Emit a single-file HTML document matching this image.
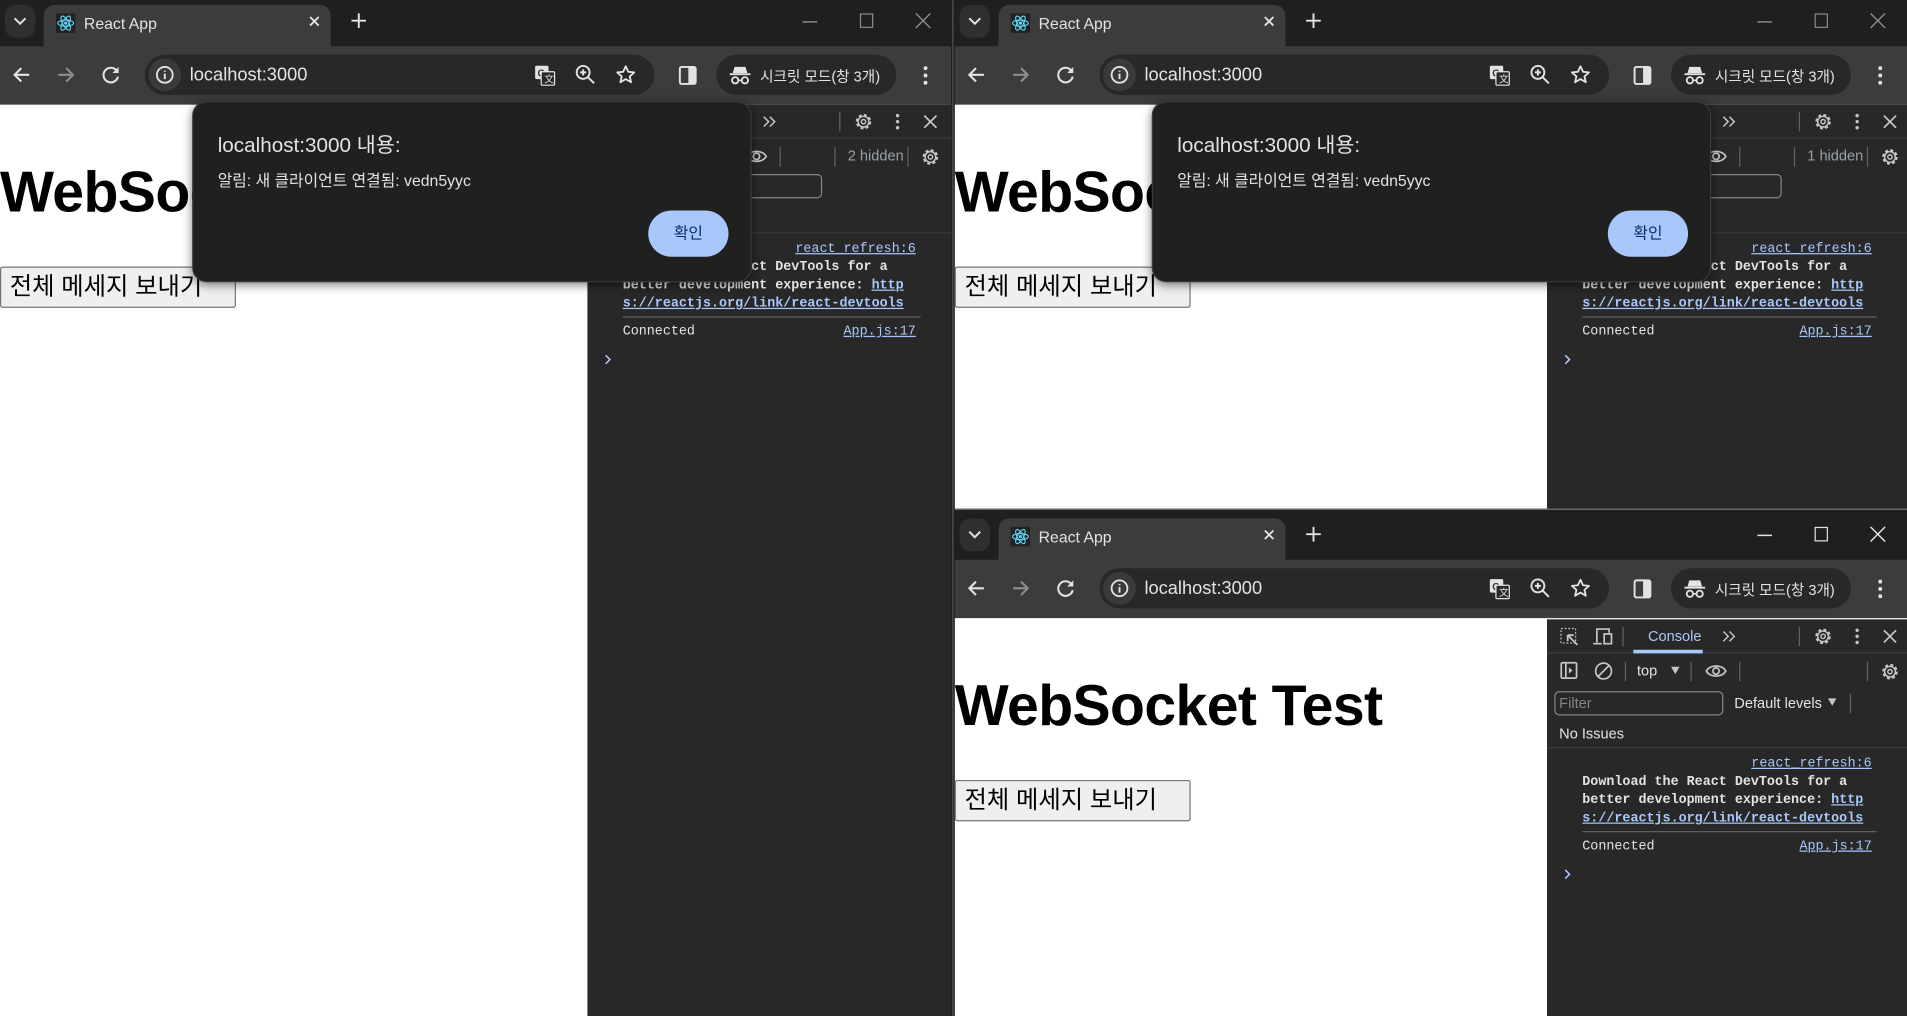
<!DOCTYPE html>
<html><head><meta charset="utf-8">
<style>
*{box-sizing:border-box;margin:0;padding:0}
html,body{width:1907px;height:1016px;overflow:hidden;background:#202020}
#stage{position:absolute;left:0;top:0;width:1568px;height:835px;transform:scale(1.21620,1.21677);transform-origin:0 0;font-family:"Liberation Sans","Noto Sans CJK KR",sans-serif}
.win{position:absolute;background:#1f1f1f;overflow:hidden}
.abs{position:absolute}
.tabbar{position:absolute;left:0;top:0;right:0;height:38px;background:#1f1f1f}
.dd{position:absolute;left:4px;top:4px;width:25px;height:27px;border-radius:9px;background:#2f2f2f}
.tab{position:absolute;left:36px;top:4px;width:236px;height:36px;background:#3c3c3c;border-radius:9px 9px 0 0}
.tabt{position:absolute;left:33px;top:8px;font-size:13px;color:#e3e3e3}
.toolbar{position:absolute;left:0;top:38px;right:0;height:48px;background:#3c3c3c}
.omni{position:absolute;left:119px;top:7px;width:419px;height:33px;border-radius:17px;background:#282828}
.url{position:absolute;left:37px;top:8px;font-size:15px;color:#e3e3e3}
.incog{position:absolute;left:589px;top:7px;width:148px;height:33px;border-radius:17px;background:#282828}
.incog span{position:absolute;left:36px;top:9px;font-size:12px;color:#e3e3e3;white-space:nowrap}
.content{position:absolute;left:0;top:86px;right:0;bottom:0;background:#fff}
h1{position:absolute;left:0;top:44px;font-size:47px;font-weight:bold;color:#000;white-space:nowrap;letter-spacing:-0.5px}
.btn{position:absolute;left:0;top:133px;width:194px;height:34px;background:#efefef;border:1px solid #767676;border-radius:2px;font-size:20px;color:#000;text-align:left;padding-left:7px;line-height:32px;white-space:nowrap;overflow:hidden}
.dt{position:absolute;top:0;bottom:0;background:#282828;color:#e3e3e3;font-size:12px}
.dt .row{position:absolute;left:0;right:0}
.sep{position:absolute;width:1px;height:16px;background:#5f6368}
.mono{font-family:"Liberation Mono",monospace;font-size:11px;font-weight:bold;color:#e3e3e3;white-space:nowrap}
.link{color:#a8c7fa;text-decoration:underline;font-weight:normal}
.dlg{position:absolute;width:460px;height:149px;background:#202020;border-radius:12px;border:1px solid #3a3a3a;box-shadow:0 2px 8px rgba(0,0,0,.5)}
.dlg .t{position:absolute;left:20px;top:21px;font-size:17px;color:#e3e3e3}
.dlg .m{position:absolute;left:20px;top:54px;font-size:13px;color:#e3e3e3}
.dlg .ok{position:absolute;left:374px;top:89px;width:66px;height:38px;border-radius:19px;background:#a8c7fa;color:#062e6f;font-size:13px;text-align:center;line-height:38px}
svg{position:absolute;overflow:visible}
</style></head><body><div id="stage">
<div class="win" style="left:0;top:0;width:782px;height:835px" id="w1"></div>
<div class="win" style="left:785px;top:0;width:783px;height:418px" id="w2"></div>
<div class="win" style="left:785px;top:422px;width:783px;height:413px" id="w3"></div>
<div class="abs" style="left:783px;top:0;width:1px;height:835px;background:#555"></div>
<div class="abs" style="left:785px;top:418px;width:783px;height:1px;background:#777"></div>
</div>
<script>
function chrome(active){
 var c=active?'#e3e3e3':'#8a8a8a';
 return `<div class="tabbar"><div class="dd"><svg style="left:7px;top:10px" width="11" height="7"><path d="M1 1l4.5 4.5L10 1" stroke="#e3e3e3" stroke-width="1.6" fill="none"/></svg></div>
 <div class="tab">
  <svg style="left:10px;top:7px" width="16" height="16" viewBox="-8 -8 16 16"><rect x="-8" y="-8" width="16" height="16" fill="#222"/><g stroke="#61dafb" stroke-width="0.9" fill="none"><ellipse rx="6.5" ry="2.5"/><ellipse rx="6.5" ry="2.5" transform="rotate(60)"/><ellipse rx="6.5" ry="2.5" transform="rotate(120)"/></g><circle r="1.3" fill="#61dafb"/></svg>
  <div class="tabt">React App</div>
  <svg style="left:218px;top:9px" width="9" height="9"><path d="M1 1l7 7M8 1l-7 7" stroke="#e3e3e3" stroke-width="1.5"/></svg>
 </div>
 <svg style="left:289px;top:11px" width="12" height="12"><path d="M6 0v12M0 6h12" stroke="#e3e3e3" stroke-width="1.6"/></svg>
 <svg style="left:660px;top:17px" width="12" height="2"><path d="M0 1h12" stroke="${c}" stroke-width="1.2"/></svg>
 <svg style="left:707px;top:11px" width="11" height="12"><rect x=".5" y=".5" width="10" height="11" stroke="${c}" fill="none"/></svg>
 <svg style="left:753px;top:11px" width="12" height="12"><path d="M0 0l12 12M12 0L0 12" stroke="${c}" stroke-width="1.2"/></svg>
 </div>
 <div class="toolbar">
 <svg style="left:10px;top:16px" width="15" height="15"><path d="M14 7.5H2M7.5 2L2 7.5 7.5 13" stroke="#e3e3e3" stroke-width="1.7" fill="none"/></svg>
 <svg style="left:47px;top:16px" width="15" height="15"><path d="M1 7.5h12M7.5 2L13 7.5 7.5 13" stroke="#8f8f8f" stroke-width="1.7" fill="none"/></svg>
 <svg style="left:84px;top:16px" width="15" height="15"><path d="M12.5 5A6 6 0 1 0 13 9" stroke="#e3e3e3" stroke-width="1.7" fill="none"/><path d="M13.5 1v5h-5z" fill="#e3e3e3"/></svg>
 <div class="omni">
  <div class="abs" style="left:3px;top:3px;width:27px;height:27px;border-radius:50%;background:#3a3a3a"></div>
  <svg style="left:9px;top:9px" width="15" height="15"><circle cx="7.5" cy="7.5" r="6.5" stroke="#e3e3e3" stroke-width="1.5" fill="none"/><path d="M7.5 6.5v4.5M7.5 4v1" stroke="#e3e3e3" stroke-width="1.6"/></svg>
  <div class="url">localhost:3000</div>
  <svg style="left:320px;top:8px" width="18" height="18"><rect x="1" y="1" width="11" height="11" fill="#e3e3e3" rx="1"/><text x="3" y="10" font-size="8" font-family="Liberation Sans" fill="#333" font-weight="bold">G</text><rect x="6" y="6" width="11" height="11" stroke="#e3e3e3" fill="#282828" rx="1"/><text x="8.5" y="15" font-size="8" fill="#e3e3e3">文</text></svg>
  <svg style="left:354px;top:8px" width="17" height="17"><circle cx="6.5" cy="6.5" r="5.3" stroke="#e3e3e3" stroke-width="1.6" fill="none"/><path d="M10.5 10.5l5 5M4 6.5h5M6.5 4v5" stroke="#e3e3e3" stroke-width="1.6"/></svg>
  <svg style="left:387px;top:8px" width="17" height="17"><path d="M8.5 1.5l2.1 4.5 4.9.5-3.7 3.3 1.1 4.8-4.4-2.6-4.4 2.6 1.1-4.8L1.5 6.5l4.9-.5z" stroke="#e3e3e3" stroke-width="1.5" fill="none" stroke-linejoin="round"/></svg>
 </div>
 <svg style="left:558px;top:16px" width="15" height="16"><rect x="1" y="1" width="13" height="14" rx="1.5" stroke="#e3e3e3" stroke-width="1.6" fill="none"/><rect x="8" y="1" width="6" height="14" fill="#e3e3e3"/></svg>
 <div class="incog"><svg style="left:11px;top:8px" width="17" height="17"><path d="M4 2h9l1.5 5h-12z" fill="#e3e3e3"/><path d="M0 8h17" stroke="#e3e3e3" stroke-width="1.5"/><circle cx="4.5" cy="13" r="2.6" stroke="#e3e3e3" stroke-width="1.5" fill="none"/><circle cx="12.5" cy="13" r="2.6" stroke="#e3e3e3" stroke-width="1.5" fill="none"/><path d="M7 13h3" stroke="#e3e3e3" stroke-width="1.3"/></svg><span>시크릿 모드(창 3개)</span></div>
 <svg style="left:759px;top:16px" width="4" height="16"><circle cx="2" cy="2" r="1.6" fill="#e3e3e3"/><circle cx="2" cy="8" r="1.6" fill="#e3e3e3"/><circle cx="2" cy="14" r="1.6" fill="#e3e3e3"/></svg>
 </div>`;
}
function gear(x,y){return `<svg style="left:${x}px;top:${y}px" width="16" height="16" viewBox="0 0 16 16"><circle cx="8" cy="8" r="5.2" stroke="#c4c7c5" stroke-width="2.4" stroke-dasharray="2.3 1.8" fill="none"/><circle cx="8" cy="8" r="4.4" stroke="#c4c7c5" stroke-width="1.2" fill="none"/><circle cx="8" cy="8" r="1.8" stroke="#c4c7c5" stroke-width="1.2" fill="none"/></svg>`}
function devtools(hidden){
 var filterRow = hidden
  ? `<div class="abs" style="left:6px;top:0px;width:187px;height:20px;border:1px solid #80868b;border-radius:4px"></div>`
  : `<div class="abs" style="left:6px;top:2px;width:139px;height:20px;border:1px solid #80868b;border-radius:4px;font-size:12px;color:#80868b;padding:2px 3px">Filter</div>
  <div class="abs" style="left:154px;top:5px;font-size:12px">Default levels</div>
  <svg style="left:231px;top:8px" width="7" height="6"><path d="M0 0h7L3.5 6z" fill="#c4c7c5"/></svg>
  <div class="sep" style="left:249px;top:4px"></div>`;
 return `<div class="dt" style="left:0;right:0">
 <div class="row" style="top:0;height:28px;border-bottom:1px solid #3c3c3c">
  <svg style="left:11px;top:7px" width="15" height="15"><rect x=".5" y=".5" width="12" height="12" stroke="#c4c7c5" stroke-dasharray="1.5 1.5" fill="none"/><path d="M6 6l8 8M6 6h5M6 6v5" stroke="#c4c7c5" stroke-width="1.5" fill="none"/></svg>
  <svg style="left:38px;top:7px" width="16" height="14"><path d="M3 12V1h10v3" stroke="#c4c7c5" stroke-width="1.4" fill="none"/><path d="M0 13h7" stroke="#c4c7c5" stroke-width="1.4"/><rect x="9" y="5" width="6" height="8" stroke="#c4c7c5" stroke-width="1.4" fill="none"/></svg>
  <div class="sep" style="left:62px;top:6px"></div>
  <div class="abs" style="left:83px;top:7px;font-size:12px;color:#a8c7fa">Console</div>
  <div class="abs" style="left:71px;top:25px;width:57px;height:3px;background:#a8c7fa"></div>
  <svg style="left:144px;top:9px" width="11" height="10"><path d="M1 1l4 4-4 4M6 1l4 4-4 4" stroke="#c4c7c5" stroke-width="1.2" fill="none"/></svg>
  <div class="sep" style="left:207px;top:6px"></div>
  ${gear(219,6)}
  <svg style="left:253px;top:7px" width="4" height="14"><circle cx="2" cy="2" r="1.4" fill="#c4c7c5"/><circle cx="2" cy="7" r="1.4" fill="#c4c7c5"/><circle cx="2" cy="12" r="1.4" fill="#c4c7c5"/></svg>
  <svg style="left:277px;top:9px" width="10" height="10"><path d="M0 0l10 10M10 0L0 10" stroke="#c4c7c5" stroke-width="1.4"/></svg>
 </div>
 <div class="row" style="top:29px;height:28px">
  <svg style="left:11px;top:6px" width="14" height="14"><rect x=".7" y=".7" width="12.6" height="12.6" rx="1" stroke="#c4c7c5" stroke-width="1.4" fill="none"/><path d="M4.5 1v12" stroke="#c4c7c5" stroke-width="1.4"/><path d="M7 4.5l3 2.5-3 2.5z" fill="#c4c7c5"/></svg>
  <svg style="left:39px;top:6px" width="15" height="15"><circle cx="7.5" cy="7.5" r="6.5" stroke="#c4c7c5" stroke-width="1.4" fill="none"/><path d="M3 12L12 3" stroke="#c4c7c5" stroke-width="1.4"/></svg>
  <div class="sep" style="left:64px;top:6px"></div>
  <div class="abs" style="left:74px;top:6px;font-size:12px">top</div>
  <svg style="left:102px;top:10px" width="7" height="6"><path d="M0 0h7L3.5 6z" fill="#c4c7c5"/></svg>
  <div class="sep" style="left:118px;top:6px"></div>
  <svg style="left:130px;top:7px" width="18" height="13"><path d="M1 6.5C4 1 14 1 17 6.5 14 12 4 12 1 6.5z" stroke="#c4c7c5" stroke-width="1.4" fill="none"/><circle cx="9" cy="6.5" r="2.6" stroke="#c4c7c5" stroke-width="1.4" fill="none"/></svg>
  <div class="sep" style="left:158px;top:6px"></div>
  ${hidden?`<div class="sep" style="left:203px;top:6px"></div><div class="abs" style="left:214px;top:6px;font-size:12px;color:#9aa0a6">${hidden}</div>`:''}
  <div class="sep" style="left:263px;top:6px"></div>
  ${gear(274,6)}
 </div>
 <div class="row" style="top:57px;height:28px">${filterRow}</div>
 <div class="row" style="top:85px;height:21px;border-bottom:1px solid #3c3c3c">
  <div class="abs" style="left:10px;top:2px;font-size:12px">No Issues</div>
 </div>
 <div class="row mono" style="top:113px">
  <div class="abs link" style="right:29px;top:0">react_refresh:6</div>
  <div class="abs" style="left:29px;top:14px;line-height:15px">Download the React DevTools for a<br>better development experience: <span class="link" style="font-weight:bold">http</span><br><span class="link" style="font-weight:bold">s://reactjs.org/link/react-devtools</span></div>
  <div class="abs" style="left:29px;right:25px;top:61px;height:1px;background:#5f6368"></div>
  <div class="abs" style="left:29px;top:68px;font-weight:normal">Connected</div>
  <div class="abs link" style="right:29px;top:68px">App.js:17</div>
  <svg style="left:14px;top:92px" width="6" height="9"><path d="M1 1l3.5 3.5L1 8" stroke="#a8c7fa" stroke-width="1.3" fill="none"/></svg>
 </div>
 </div>`;
}
function page(){return `<div class="content"><h1>WebSocket Test</h1><div class="btn">전체 메세지 보내기</div></div>`}
function dlg(left){return `<div class="dlg" style="left:${left}px;top:83px"><div class="t">localhost:3000 내용:</div><div class="m">알림: 새 클라이언트 연결됨: vedn5yyc</div><div class="ok">확인</div></div>`}
document.getElementById('w1').innerHTML=chrome(false)+page()+`<div class="abs" style="left:483px;top:86px;right:0;bottom:0">${devtools('2 hidden')}</div>`+dlg(158);
document.getElementById('w2').innerHTML=chrome(false)+page()+`<div class="abs" style="left:487px;top:86px;right:0;bottom:0">${devtools('1 hidden')}</div>`+dlg(162);
document.getElementById('w3').innerHTML=chrome(true)+page()+`<div class="abs" style="left:487px;top:87px;right:0;bottom:0">${devtools('')}</div>`;
</script>
</body></html>
